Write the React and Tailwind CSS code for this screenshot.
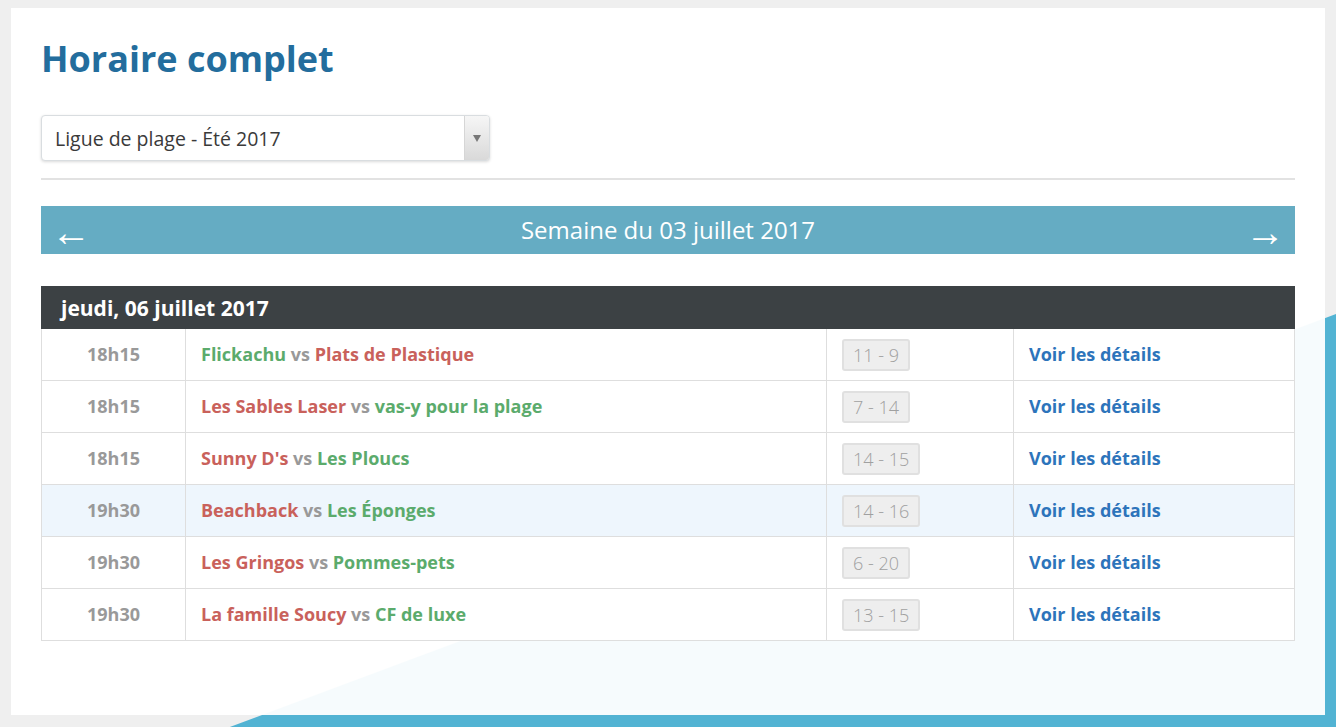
import React from "react";

const MATCHES = [
  { time: "18h15", home: "Flickachu", homeWin: true, away: "Plats de Plastique", score: "11 - 9" },
  { time: "18h15", home: "Les Sables Laser", homeWin: false, away: "vas-y pour la plage", score: "7 - 14" },
  { time: "18h15", home: "Sunny D's", homeWin: false, away: "Les Ploucs", score: "14 - 15" },
  { time: "19h30", home: "Beachback", homeWin: false, away: "Les Éponges", score: "14 - 16", highlight: true },
  { time: "19h30", home: "Les Gringos", homeWin: false, away: "Pommes-pets", score: "6 - 20" },
  { time: "19h30", home: "La famille Soucy", homeWin: false, away: "CF de luxe", score: "13 - 15" },
];

const Team = ({ name, win }) => (
  <span className={win ? "text-[#5bab6c]" : "text-[#c9615b]"}>{name}</span>
);

export default function App() {
  return (
    <div
      className="relative w-full h-[727px] overflow-hidden bg-[#efefef]"
      style={{ fontFamily: '"Open Sans", "Liberation Sans", sans-serif' }}
    >
      {/* fond décoratif bleu */}
      <div className="absolute inset-0 bg-[#52b3d3] [clip-path:polygon(17.2%_100%,100%_43.2%,100%_100%)]" />

      <div className="relative ml-[11px] mt-[8px] w-[1314px] h-[707px] bg-white/95 px-[30px] pt-[31px]">
        <h1 className="text-[36px] leading-[40px] font-bold text-[#236d9d]">Horaire complet</h1>

        <div className="mt-[36px] w-[449px] h-[46px] flex rounded-[4px] border border-[#d9dde0] bg-white shadow-[0_1px_3px_rgba(0,0,0,0.15)] overflow-hidden">
          <div className="flex-1 flex items-center pl-[13px] pt-[2px] text-[19.5px] text-[#3a3a3a]">
            Ligue de plage - Été 2017
          </div>
          <div className="w-[25px] flex items-center justify-center border-l border-[#d6d6d6] bg-gradient-to-b from-[#f6f6f6] to-[#d9d9d9]">
            <span className="block w-0 h-0 border-l-[4px] border-r-[4px] border-t-[7px] border-l-transparent border-r-transparent border-t-[#777]" />
          </div>
        </div>

        <div className="mt-[17px] h-[2px] bg-[#e2e2e2]" />

        <div className="mt-[26px] h-[48px] bg-[#65acc3] flex items-center justify-between pl-[10px] pr-[10px] text-white">
          <span className="text-[40px] leading-none mt-[2px]">←</span>
          <span className="text-[24px]">Semaine du 03 juillet 2017</span>
          <span className="text-[40px] leading-none mt-[2px]">→</span>
        </div>

        <table className="mt-[32px] w-full border-collapse text-[18px] font-bold">
          <thead>
            <tr className="bg-[#3c4144]">
              <th colSpan={4} className="h-[42px] pl-[19px] pt-[2px] text-left text-[21px] text-white border border-[#3c4144]">
                jeudi, 06 juillet 2017
              </th>
            </tr>
          </thead>
          <tbody>
            {MATCHES.map((m, i) => (
              <tr key={i} className={m.highlight ? "bg-[#eef6fd]" : "bg-white"}>
                <td className="h-[52px] w-[144px] border border-[#dedede] text-center text-[#999]">{m.time}</td>
                <td className="h-[52px] w-[641px] border border-[#dedede] pl-[15px]">
                  <Team name={m.home} win={m.homeWin} />
                  <span className="text-[#999]"> vs </span>
                  <Team name={m.away} win={!m.homeWin} />
                </td>
                <td className="h-[52px] w-[187px] border border-[#dedede] pl-[15px]">
                  <span className="inline-block h-[32px] leading-[28px] px-[9px] rounded-[3px] border-2 border-[#e0e0e0] bg-[#eeeeee] text-[#a0a0a0] font-light">
                    {m.score}
                  </span>
                </td>
                <td className="h-[52px] border border-[#dedede] pl-[15px] text-[#2d74bb]">Voir les détails</td>
              </tr>
            ))}
          </tbody>
        </table>
      </div>
    </div>
  );
}
